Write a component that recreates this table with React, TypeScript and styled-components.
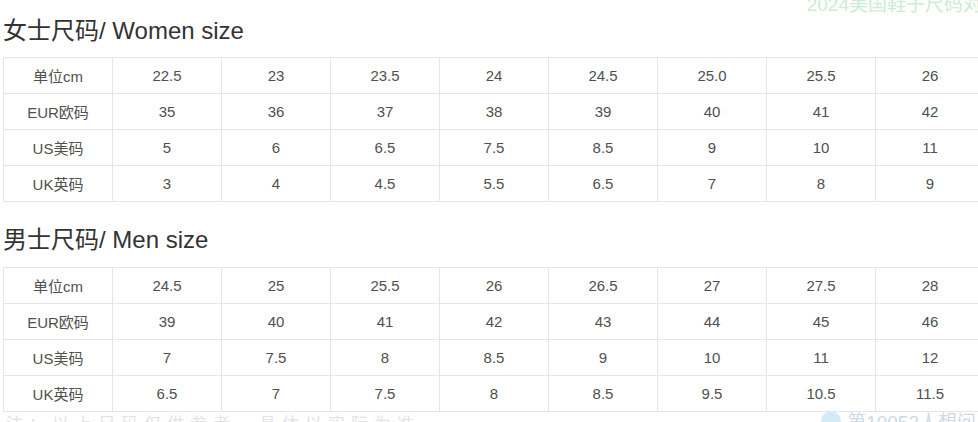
import React from 'react';
import styled, { createGlobalStyle } from 'styled-components';

interface SizeTable {
  title: string;
  rows: string[][];
}

const tables: SizeTable[] = [
  {
    title: '女士尺码/ Women size',
    rows: [
      ['单位cm', '22.5', '23', '23.5', '24', '24.5', '25.0', '25.5', '26'],
      ['EUR欧码', '35', '36', '37', '38', '39', '40', '41', '42'],
      ['US美码', '5', '6', '6.5', '7.5', '8.5', '9', '10', '11'],
      ['UK英码', '3', '4', '4.5', '5.5', '6.5', '7', '8', '9'],
    ],
  },
  {
    title: '男士尺码/ Men size',
    rows: [
      ['单位cm', '24.5', '25', '25.5', '26', '26.5', '27', '27.5', '28'],
      ['EUR欧码', '39', '40', '41', '42', '43', '44', '45', '46'],
      ['US美码', '7', '7.5', '8', '8.5', '9', '10', '11', '12'],
      ['UK英码', '6.5', '7', '7.5', '8', '8.5', '9.5', '10.5', '11.5'],
    ],
  },
];

const GlobalStyle = createGlobalStyle`
  html, body {
    margin: 0;
    padding: 0;
    background: #fff;
    overflow: hidden;
  }
  body {
    font-family: "Liberation Sans", "Noto Sans CJK SC", sans-serif;
  }
`;

const Page = styled.div`
  position: relative;
  width: 978px;
  height: 422px;
  overflow: hidden;
  padding-left: 3px;
  box-sizing: border-box;
`;

const Section = styled.section`
  display: flex;
  flex-direction: column;
`;

const Title = styled.h2<{ first?: boolean }>`
  margin: 0;
  padding-top: ${(p) => (p.first ? '18px' : '25px')};
  margin-bottom: ${(p) => (p.first ? '13px' : '14px')};
  font-size: 24px;
  line-height: 26px;
  font-weight: normal;
  color: #333;
  white-space: nowrap;
`;

const Table = styled.table`
  border-collapse: collapse;
  table-layout: fixed;
  width: 981px;
`;

const Cell = styled.td`
  width: 108px;
  height: 35px;
  padding: 0;
  border: 1px solid #e6e6e6;
  text-align: center;
  vertical-align: middle;
  font-size: 15px;
  color: #505050;
`;

const TopHint = styled.div`
  position: absolute;
  top: -11px;
  right: -4px;
  font-size: 19px;
  color: #cdebd6;
  white-space: nowrap;
`;

const BottomHint = styled.div`
  position: absolute;
  bottom: -12px;
  right: 2px;
  display: flex;
  align-items: center;
  gap: 6px;
  font-size: 19px;
  color: #cdd9e6;
  white-space: nowrap;
`;

const HintIcon = styled.span`
  width: 20px;
  height: 20px;
  border-radius: 50%;
  background: #d3ebf6;
`;

const FootNote = styled.div`
  position: absolute;
  left: 6px;
  bottom: -13px;
  font-size: 17px;
  letter-spacing: 6px;
  color: #e4e4e4;
  white-space: nowrap;
`;

export default function App(): React.ReactElement {
  return (
    <>
      <GlobalStyle />
      <Page>
        <TopHint>2024美国鞋子尺码对</TopHint>
        {tables.map(({ title, rows }, i) => (
          <Section key={title}>
            <Title first={i === 0}>{title}</Title>
            <Table>
              <tbody>
                {rows.map((row) => (
                  <tr key={row[0]}>
                    {row.map((value, j) => (
                      <Cell key={j}>{value}</Cell>
                    ))}
                  </tr>
                ))}
              </tbody>
            </Table>
          </Section>
        ))}
        <FootNote>注：以上尺码仅供参考，具体以实际为准</FootNote>
        <BottomHint>
          <HintIcon />
          第10052人想问
        </BottomHint>
      </Page>
    </>
  );
}
